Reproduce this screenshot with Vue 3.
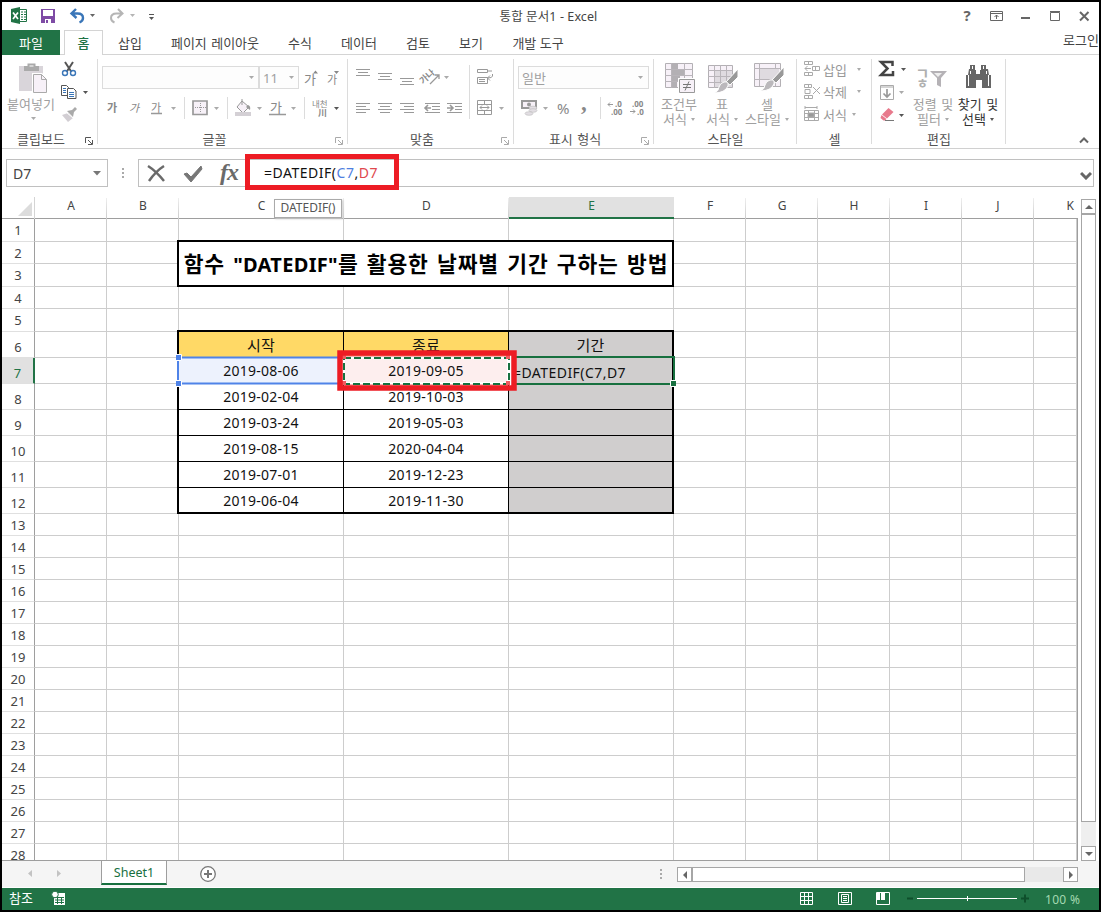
<script setup>
const tabs = [
  { label: '삽입', cls: 't-s' },
  { label: '페이지 레이아웃', cls: 't-xl' },
  { label: '수식', cls: 't-s' },
  { label: '데이터', cls: 't-m' },
  { label: '검토', cls: 't-s' },
  { label: '보기', cls: 't-s2' },
  { label: '개발 도구', cls: 't-l' }
]
const columns = ['A', 'B', 'C', 'D', 'E', 'F', 'G', 'H', 'I', 'J', 'K']
const dates = {
  7: ['2019-08-06', '2019-09-05'],
  8: ['2019-02-04', '2019-10-03'],
  9: ['2019-03-24', '2019-05-03'],
  10: ['2019-08-15', '2020-04-04'],
  11: ['2019-07-01', '2019-12-23'],
  12: ['2019-06-04', '2019-11-30']
}
const heads = { C: '시작', D: '종료', E: '기간' }

function cellText(c, r) {
  if (r === 6) return heads[c] || ''
  if (dates[r]) {
    if (c === 'C') return dates[r][0]
    if (c === 'D') return dates[r][1]
    if (c === 'E' && r === 7) return '=DATEDIF(C7,D7'
  }
  return ''
}
function cellClass(c, r) {
  const inTable = 'CDE'.includes(c) && r >= 6 && r <= 12
  return {
    tbl: inTable,
    head: inTable && r === 6 && c !== 'E',
    gray: inTable && c === 'E',
    first: r === 6 && inTable,
    last: r === 12 && inTable,
    lft: inTable && c === 'C',
    rgt: inTable && c === 'E',
    refc: c === 'C' && r === 7,
    refd: c === 'D' && r === 7,
    edit: c === 'E' && r === 7
  }
}
const caret = (x, y) => `M${x} ${y}h5l-2.5 3z`
const lines = (list) => list.map(([x, y, w]) => `M${x} ${y}.5h${w}`).join('')
</script>

<template>
  <div class="window">
    <!-- title bar -->
    <header class="titlebar">
      <svg class="quick" width="168" height="28" viewBox="2 2 168 28">
        <path d="M20 9.5h6.5v12H20" fill="#fff" stroke="#217346" />
        <path d="M21 12h2m1 0h2m-5 2.500h2m1 0h2m-5 2.500h2m1 0h2m-5 2.500h2m1 0h2" stroke="#217346" />
        <path d="M11 9l9-2v17l-9-2z" fill="#217346" />
        <path d="M13 12.500l5 6.500m0-6.500l-5 6.500" stroke="#fff" stroke-width="1.700" />
        <path d="M41 9h14v14h-14z" fill="#7e4ba5" />
        <path d="M43 10h10v6h-10zM45 19h6v4h-6z" fill="#fff" /><path d="M46 20h2v3h-2z" fill="#7e4ba5" />
        <path d="M76 9l-4.500 4.500 5 4.500M72 13.500h5.500q5.500 0 5.500 4.500 0 3-3.500 4.500" fill="none" stroke="#3a76b8" stroke-width="2.400" />
        <path d="M118 9l4.500 4.500-5 4.500M122 13.500h-5.500q-5.500 0-5.500 4.500 0 3 3.500 4.500" fill="none" stroke="#b5b5b5" stroke-width="2" />
        <path :d="caret(90, 14)" fill="#666" /><path :d="caret(130, 14)" fill="#b5b5b5" />
        <path d="M149 14.500h5" stroke="#555" /><path :d="caret(149, 17)" fill="#555" />
      </svg>
      <div class="doc">통합 문서1 - Excel</div>
      <svg class="winbtns" width="136" height="28" viewBox="960 2 136 28">
        <text x="963.500" y="21" class="q">?</text>
        <g fill="none" stroke="#666">
          <path d="M990.500 11.500h12v9h-12zM990 13.500h13M996.500 19v-4m-2 2l2-2 2 2" />
          <path d="M1021 18h9" stroke-width="2" />
          <path d="M1050.500 12.500h9v8h-9zM1050 11.500h10" />
          <path d="M1080 12l8.500 8.500m0-8.500l-8.500 8.500" stroke-width="2" />
        </g>
      </svg>
    </header>

    <!-- ribbon tabs -->
    <nav class="tabs">
      <span class="file">파일</span>
      <span class="home">홈</span>
      <span v-for="t in tabs" :key="t.label" class="tab" :class="t.cls">{{ t.label }}</span>
      <span class="login">로그인</span>
    </nav>

    <!-- ribbon -->
    <section class="ribbon">
      <div class="group g-clip">
        <div class="body">
          <div class="big paste">
            <svg width="50" height="38" viewBox="6 57 50 38">
              <path d="M19 66h24v25H19z" fill="#d9d5da" /><path d="M24 66h15v5H24z" fill="#aaa" /><path d="M28.500 64.500h6v3h-6z" fill="#fff" stroke="#aaa" stroke-width="2" />
              <path d="M32 73h10l6 5v16h-16z" fill="#fff" /><path d="M33.500 74.500h8l5 5v13h-13z" fill="#f7f1f8" stroke="#aaa" /><path d="M41.500 74.500v5h5" fill="none" stroke="#aaa" />
            </svg>
            <span>붙여넣기</span>
            <svg width="50" height="8" viewBox="6 113 50 8"><path :d="caret(31, 117)" fill="#aaa" /></svg>
          </div>
          <svg width="38" height="70" viewBox="58 57 38 70">
            <path d="M65 62l6.500 10M73 62l-6.500 10" stroke="#555" stroke-width="2" />
            <g fill="none" stroke="#3a76b8" stroke-width="1.400"><circle cx="65" cy="73" r="2.500" /><circle cx="73" cy="73" r="2.500" /></g>
            <g fill="#fff" stroke="#555"><path d="M61.500 85.500h5l2 2v8h-7z" /><path d="M67.500 88.500h6l2.500 2.500v7.500h-8.500z" /></g>
            <path d="M63 88.500h3m-3 2h3m-3 2h3M69 92.500h5m-5 2h5m-5 2h5" stroke="#3a76b8" />
            <path :d="caret(83, 91)" fill="#555" />
            <path d="M62 115l6-2 5 5-5 4z" fill="#d2ced3" /><path d="M67 111l5-1 3-3 2 2-3 3-1 5z" fill="#aaa" /><path d="M66.500 112.500l6.500 5.500" stroke="#fff" />
          </svg>
        </div>
        <div class="cap"><span>클립보드</span></div>
        <svg class="launch dark" width="8" height="8" viewBox="0 0 8 8"><path d="M.5 6V.500H6M3 3l4 4M7.500 3v4.500H3" /></svg>
      </div>

      <div class="group g-font">
        <div class="body col">
          <div class="line top">
            <div class="combo wide"><svg width="5" height="3" viewBox="0 0 5 3"><path d="M0 0h5l-2.500 3z" /></svg></div>
            <div class="combo size"><span>11</span><svg width="5" height="3" viewBox="0 0 5 3"><path d="M0 0h5l-2.500 3z" /></svg></div>
            <svg width="46" height="25" viewBox="299 65 46 25">
              <text x="304" y="83" class="ga g13">가</text><text x="327" y="83" class="ga g11">가</text>
              <path d="M313 72.500h5l-2.500-3zM334 70h5l-2.500 3z" fill="#888" />
            </svg>
          </div>
          <svg width="248" height="32" viewBox="98 91 248 32">
            <text x="107" y="112" class="ga g11 b">가</text><text x="129" y="112" class="ga g11 i">가</text><text x="151" y="112" class="ga g11">가</text>
            <path d="M151 113.500h11M269 114.500h17" stroke="#999" stroke-width="1.500" />
            <path d="M184.500 97v22M227.500 97v22M304.500 97v22" stroke="#dcdcdc" />
            <path d="M193 101h14v13.500h-14z" fill="#f7f1f8" stroke="#999" stroke-width="1.700" /><path d="M195 107.500h11M200.500 103v10" stroke="#999" stroke-dasharray="1 1" />
            <path d="M242 101l7 6-6 6-6-6zM242 99v6" fill="#f7f1f8" stroke="#999" /><path d="M248 105q3 1 2 5l-4-3z" fill="#999" /><path d="M235 112h16v4h-16z" fill="#d4d0d5" />
            <text x="270" y="112" class="ga g13">가</text>
            <g fill="#aaa"><path :d="caret(171, 107)" /><path :d="caret(214, 107)" /><path :d="caret(257, 107)" /><path :d="caret(291, 107)" /></g>
            <text x="312" y="107" class="ga g8">내천</text><text x="318" y="116" class="ga g9 b">川</text><path :d="caret(334, 107)" fill="#555" />
          </svg>
        </div>
        <div class="cap"><span>글꼴</span></div>
        <svg class="launch" width="8" height="8" viewBox="0 0 8 8"><path d="M.5 6V.500H6M3 3l4 4M7.500 3v4.500H3" /></svg>
      </div>

      <div class="group g-align">
        <div class="body col">
          <svg width="164" height="34" viewBox="348 57 164 34">
            <path :d="lines([[356,69,14],[358,72,10],[356,75,14],[378,73,14],[380,76,10],[378,79,14],[400,78,14],[402,81,10],[400,84,14]])" stroke="#999" />
            <text x="419" y="80" class="ga g9 b" transform="rotate(-42 427 77)">가나</text>
            <path d="M430 84l9-9m-4 0h4v4" fill="none" stroke="#999" stroke-width="1.300" /><path :d="caret(444, 76)" fill="#aaa" />
            <path d="M469.500 65v26" stroke="#dcdcdc" />
            <path d="M477.500 69.500h10v3h-10zM477.500 77.500h10v6h-10zM488 71h4M479 79.500h6m-6 2h6M492.500 74v2q0 2-5 2m2.500-2.500l-2.500 2.500 2.500 2.500" fill="none" stroke="#999" />
          </svg>
          <svg width="164" height="32" viewBox="348 91 164 32">
            <path :d="lines([[356,103,14],[356,106,10],[356,109,14],[356,112,10],[378,103,14],[380,106,10],[378,109,14],[380,112,10],[400,103,14],[404,106,10],[400,109,14],[404,112,10],[425,103,15],[432,106,8],[432,109,8],[425,112,15],[447,103,15],[455,106,7],[455,109,7],[447,112,15]])" stroke="#999" />
            <path d="M431 108h-6m3-3l-3 3 3 3M447 108h6m-3-3l3 3-3 3" fill="none" stroke="#999" stroke-width="1.600" />
            <path d="M469.500 91v28" stroke="#dcdcdc" />
            <path d="M477.500 100.500h14v14h-14zM477 104.500h15M477 110.500h15M484.500 101v3m0 7v4M480 107.500h9m-7-2l-2 2 2 2m5-4l2 2-2 2" fill="none" stroke="#999" />
            <path :d="caret(499, 107)" fill="#aaa" />
          </svg>
        </div>
        <div class="cap"><span>맞춤</span></div>
        <svg class="launch" width="8" height="8" viewBox="0 0 8 8"><path d="M.5 6V.500H6M3 3l4 4M7.500 3v4.500H3" /></svg>
      </div>

      <div class="group g-num">
        <div class="body col">
          <div class="line top">
            <div class="combo fmt"><span>일반</span><svg width="5" height="3" viewBox="0 0 5 3"><path d="M0 0h5l-2.500 3z" /></svg></div>
          </div>
          <svg width="138" height="32" viewBox="514 91 138 32">
            <path d="M522 101h14v7h-14z" fill="#f7f1f8" stroke="#999" stroke-width="2" /><circle cx="529" cy="104.500" r="2" fill="#999" />
            <g fill="#e2dee3" stroke="#bbb" stroke-width=".600"><ellipse cx="533" cy="108" rx="4" ry="1.800" /><ellipse cx="533" cy="110.500" rx="4" ry="1.800" /><ellipse cx="529" cy="113.500" rx="4" ry="1.800" /></g>
            <g fill="#aaa"><path :d="caret(543, 107)" /></g>
            <text x="557" y="114" class="pct">%</text><text x="581" y="110" class="comma">,</text>
            <path d="M600.500 97v22" stroke="#dcdcdc" />
            <text x="615" y="107" class="dec">.0</text><text x="611" y="115" class="dec">.00</text>
            <text x="632" y="107" class="dec">.00</text><text x="637" y="115" class="dec">.0</text>
            <path d="M613 104.500h-5m2-2l-2 2 2 2M630 111.500h5m-2-2l2 2-2 2" fill="none" stroke="#999" />
          </svg>
        </div>
        <div class="cap"><span>표시 형식</span></div>
        <svg class="launch" width="8" height="8" viewBox="0 0 8 8"><path d="M.5 6V.500H6M3 3l4 4M7.500 3v4.500H3" /></svg>
      </div>

      <div class="group g-style">
        <div class="body">
          <div class="big b1">
            <svg width="50" height="38" viewBox="654 57 50 38">
              <path d="M665.500 63.500h27v24h-27z" fill="#f7f1f8" stroke="#b3b0b4" /><path d="M672 64h6v6h-6zM672 70h12v5h-12zM672 75h8v6h-8zM672 81h5v6h-5z" fill="#b3b0b4" />
              <path d="M665 69.500h28M665 75.500h28M665 81.500h28M671.500 63v25M684.500 63v25" stroke="#b9b5ba" fill="none" />
              <path d="M678 78h18v16h-18z" fill="#fff" /><path d="M679.500 79.500h15v13h-15z" fill="#f7f1f8" stroke="#999" /><path d="M683 84.500h8m-8 3h8m-2-6l-4 9" stroke="#777" />
            </svg>
            <span>조건부</span><span>서식<i class="car"></i></span>
          </div>
          <div class="big b2">
            <svg width="42" height="38" viewBox="701 57 42 38">
              <path d="M708.500 65.500h24v22h-24z" fill="#f7f1f8" stroke="#b3b0b4" /><path d="M715 71h17v16h-17z" fill="#dfdbe0" /><path d="M708 70.500h25M708 76.500h25M708 82.500h25M714.500 65v23M720.500 65v23M726.500 65v23" stroke="#b9b5ba" />
              <path d="M738 69v8l-8 8-4-3z" fill="#999" stroke="#fff" /><path d="M724 82q5-1 4 4-3 7-14 7 5-2 5-6 1-4 5-5" fill="#bbb8bc" stroke="#fff" />
            </svg>
            <span>표</span><span>서식<i class="car"></i></span>
          </div>
          <div class="big b3">
            <svg width="50" height="38" viewBox="742 57 50 38">
              <path d="M754.500 63.500h26v23h-26z" fill="#f7f1f8" stroke="#b3b0b4" /><path d="M754 68.500h26M754 79.500h26M759.500 63v23M775.500 63v23" stroke="#b9b5ba" /><path d="M760 69h19v10h-19z" fill="#dfdbe0" />
              <path d="M784 67v8l-8 8-4-3z" fill="#999" stroke="#fff" /><path d="M770 80q5-1 4 4-3 7-14 7 5-2 5-6 1-4 5-5" fill="#bbb8bc" stroke="#fff" />
            </svg>
            <span>셀</span><span>스타일<i class="car"></i></span>
          </div>
        </div>
        <div class="cap"><span>스타일</span></div>
      </div>

      <div class="group g-cell">
        <div class="body col">
          <div class="item"><svg width="17" height="16" viewBox="804 62 17 16"><path d="M804.500 62.500h8v3h-8zM808.500 62v4M804.500 73.500h8v3h-8zM808.500 73v4M812.500 67.500h7v4h-7zM815.500 67v4M811 69.500h-6m2.500-2.500l-2.500 2.500 2.500 2.500" /></svg><span>삽입</span><i class="car"></i></div>
          <div class="item"><svg width="17" height="16" viewBox="804 85 17 16"><path d="M804.500 85.500h7v3h-7zM808.500 85v4M804.500 96.500h8v3h-8zM808.500 96v4M805 90.500h5v4h-5zM813 88l7 7m0-7l-7 7" /></svg><span>삭제</span><i class="car"></i></div>
          <div class="item near"><svg width="17" height="16" viewBox="804 107 17 16"><path d="M804.500 111.500h14v10h-14zM804 114.500h15M804 118.500h15M808.500 111v11M814.500 111v11M805 108.500h12m-12-1.500v3m12-3v3" /><path d="M808 114h6v4h-6z" class="f" /></svg><span>서식</span><i class="car"></i></div>
        </div>
        <div class="cap"><span>셀</span></div>
      </div>

      <div class="group g-edit">
        <div class="body">
          <svg width="38" height="70" viewBox="872 57 38 70">
            <path d="M892.500 66v-4h-11.500l6.500 6.500-6.500 6.500h12v-4" fill="none" stroke="#444" stroke-width="2.500" />
            <path :d="caret(901, 68)" fill="#555" /><path :d="caret(899, 91)" fill="#aaa" /><path :d="caret(899, 114)" fill="#555" />
            <path d="M880.500 85.500h13v14h-13zM880 87h14" fill="#fff" stroke="#aaa" /><path d="M887 89v8m-3.500-3.500L887 97l3.500-3.500" fill="none" stroke="#999" stroke-width="1.700" />
            <path d="M888.500 108l5 4-6.500 6.500-5-4z" fill="#e8798c" /><path d="M881.500 115l5 4-1.500 1.500h-1.500l-3-2.500z" fill="#e8798c" /><path d="M885 120.500h9" stroke="#777" />
          </svg>
          <div class="big b4">
            <svg width="46" height="38" viewBox="910 57 46 38">
              <text x="915.500" y="79" class="sortk">ㄱ</text><text x="916.500" y="88" class="sortk sm">ㅎ</text>
              <path d="M930 71h17l-6 7v9l-4-2v-7z" fill="#b5b2b6" /><path d="M934 73h8l-4 4z" fill="#eee" />
            </svg>
            <span>정렬 및</span><span>필터<i class="car"></i></span>
          </div>
          <div class="big b5">
            <svg width="46" height="38" viewBox="955 57 46 38">
              <path d="M970 65h5v5h1v4h4v-4h1v-5h5v4h2l1 6h2v13h-9v-8h-6v8h-10V75h2l1-6h1z" fill="#666" /><path d="M972.500 66v3M983.500 66v3M968.500 75v11M988.500 75v11M970.500 71v3M986.500 71v3" stroke="#fff" />
            </svg>
            <span>찾기 및</span><span>선택<i class="car"></i></span>
          </div>
        </div>
        <div class="cap"><span>편집</span></div>
      </div>
      <svg class="collapse" width="12" height="8" viewBox="0 0 12 8"><path d="M2 6.500l4-4 4 4" /></svg>
    </section>

    <!-- formula bar -->
    <section class="fbar">
      <div class="namebox"><span>D7</span><svg width="8" height="5" viewBox="0 0 8 5"><path d="M0 0h8l-4 4.500z" fill="#777" /></svg></div>
      <svg class="dots" width="4" height="12" viewBox="0 0 4 12"><path d="M1 1h2v2H1zM1 5h2v2H1zM1 9h2v2H1z" fill="#aaa" /></svg>
      <div class="fbox">
        <svg width="106" height="26" viewBox="139 160 106 26">
          <path d="M148 166q8 5 16 15M164 166q-8 5-15 15" fill="none" stroke="#6a6a6a" stroke-width="2.500" />
          <path d="M184 174l3-1 4 4 10-11 1 3-11 13z" fill="#777" stroke="#777" />
          <text x="220" y="180" class="fx">fx</text>
        </svg>
        <div class="formula">=DATEDIF(<b class="r1">C7</b>,<b class="r2">D7</b></div>
        <svg class="chev" width="12" height="9" viewBox="0 0 12 9"><path d="M1 2l5 5 5-5" /></svg>
      </div>
      <div class="mark"></div>
    </section>

    <!-- sheet -->
    <section class="sheet">
      <div class="grid">
        <div class="heads">
          <div class="corner"><svg width="14" height="14" viewBox="0 0 14 14"><path d="M14 0v14H0z" fill="#dcdcdc" /></svg></div>
          <div v-for="c in columns" :key="c" class="ch" :class="{ on: c === 'E', k: c === 'K' }">{{ c }}</div>
        </div>
        <div v-for="r in 28" :key="r" class="row" :class="{ odd: r === 1 || r === 3 || r === 5, tall: r > 5 && r < 13 }">
          <div class="rh" :class="{ on: r === 7 }"><span>{{ r }}</span></div>
          <div v-for="c in columns" :key="c" class="cell" :class="cellClass(c, r)"><span>{{ cellText(c, r) }}</span></div>
        </div>
        <div class="title">함수 <span>"DATEDIF"</span>를 활용한 날짜별 기간 구하는 방법</div>
        <div class="tip">DATEDIF()</div>
        <svg class="over" width="500" height="46" viewBox="176 348 500 46">
          <path d="M508 357h166v27H508" fill="none" stroke="#17703f" stroke-width="2" /><path d="M670.500 380.500h6v6h-6z" fill="#17703f" stroke="#fff" />
          <path d="M179 357.500h162M179 383.500h162" stroke="#4f83e8" stroke-width="2" /><path d="M178 357v27" stroke="#4f83e8" stroke-width="2" />
          <path d="M175.500 354.500h6v6h-6zM175.500 380.500h6v6h-6z" fill="#4f83e8" stroke="#fff" />
          <path d="M343.500 357.500h165v26h-165z" fill="none" stroke="#fff" stroke-width="3" />
          <path d="M511 355v31" stroke="#fff" stroke-width="2" />
          <path d="M345 356h163M345 385h163" stroke="#f05a5f" />
          <path d="M344 358h165v26H344z" fill="none" stroke="#17703f" stroke-width="2" stroke-dasharray="7 3" />
          <path d="M342 355h4v4h-4zM506 355h4v4h-4zM342 381h4v4h-4zM506 381h4v4h-4z" fill="#f05a5f" />
          <path d="M340 353h174v35H340z" fill="none" stroke="#ed1c24" stroke-width="5.500" />
        </svg>
      </div>
      <div class="vbar">
        <div class="sb"><svg width="8" height="4" viewBox="0 0 8 4"><path d="M4 0l4 4H0z" /></svg></div>
        <div class="vthumb"></div>
        <div class="vtrack"></div>
        <div class="sb"><svg width="8" height="4" viewBox="0 0 8 4"><path d="M0 0h8L4 4z" /></svg></div>
      </div>
    </section>

    <!-- sheet tabs -->
    <section class="stabs">
      <svg width="98" height="26" viewBox="2 861 98 26"><path d="M32 870v7l-4-3.500zM57 870v7l4-3.500z" fill="#c3c3c3" /></svg>
      <div class="stab">Sheet1</div>
      <svg class="plus" width="18" height="18" viewBox="0 0 18 18"><circle cx="9" cy="9" r="7.300" /><path d="M5 9h8M9 5v8" /></svg>
      <svg class="dots hd" width="4" height="12" viewBox="0 0 4 12"><path d="M1 1h2v2H1zM1 5h2v2H1zM1 9h2v2H1z" fill="#aaa" /></svg>
      <div class="hbar">
        <div class="sb"><svg width="4" height="8" viewBox="0 0 4 8"><path d="M4 0v8L0 4z" /></svg></div>
        <div class="hthumb"></div>
        <div class="sb"><svg width="4" height="8" viewBox="0 0 4 8"><path d="M0 0v8l4-4z" /></svg></div>
      </div>
    </section>

    <!-- status bar -->
    <footer class="status">
      <span class="mode">참조</span>
      <svg width="16" height="16" viewBox="51 891 16 16"><path d="M54 893h11v12H54z" fill="#fff" /><path d="M55 897.500h9m-9 2.500h9m-9 2.500h9M57.500 897v7M61.500 897v7" stroke="#217346" /><circle cx="55" cy="894.500" r="3.300" fill="#fff" stroke="#217346" /></svg>
      <svg class="zoom" width="236" height="20" viewBox="798 889 236 20">
        <g fill="none" stroke="#fff">
          <path d="M800.500 892.500h12v12h-12zM800 896.500h13M800 900.500h13M804.500 892v13M808.500 892v13" />
          <path d="M838.500 892.500h13v12h-13zM841.500 894.500h7v8h-7zM843 896.500h4m-4 2h4m-4 2h4" />
          <path d="M876.500 892.500h13v12h-13z" />
        </g>
        <path d="M877 893h3v7h-3zM881 893h4v7h-4z" fill="#fff" />
        <path d="M907 898.500h6M1021 898.500h8M1025 894.500v8" stroke="#0e4f2b" stroke-width="2" />
        <path d="M917 898.500h100M967.500 896v5" stroke="#fff" />
      </svg>
      <span class="pc">100 %</span>
    </footer>
  </div>
</template>

<style>
html, body { margin: 0; overflow: hidden; }
</style>

<style scoped>
.window { width: 1101px; height: 912px; box-sizing: border-box; border: 2px solid #000; background: #fff; overflow: hidden; font-family: "Noto Sans", "Noto Sans CJK KR", sans-serif; font-size: 13px; color: #444; display: flex; flex-direction: column; }
svg { display: block; flex: none; }
.titlebar { height: 28px; display: flex; }
.doc { flex: 1; text-align: center; line-height: 30px; font-size: 12.500px; letter-spacing: .1px; margin-right: 33px; }
.winbtns { margin-right: 3px; }
.q { font: bold 15px "Noto Sans"; fill: #666; }
.tabs { height: 25px; display: flex; box-sizing: border-box; line-height: 26px; box-shadow: inset 0 -1px #d4d4d4; text-align: center; color: #444; white-space: nowrap; }
.file { width: 58px; background: #217346; color: #fff; }
.home { width: 39px; margin-left: 4px; box-sizing: border-box; border: 1px solid #d4d4d4; border-bottom: 0; background: #fff; color: #217346; line-height: 25px; font-weight: 500; }
.t-s { width: 54px; } .t-s2 { width: 52px; } .t-m { width: 64px; } .t-l { width: 82px; } .t-xl { width: 116px; word-spacing: 1px; }
.login { margin-left: auto; line-height: 20px; width: 36px; color: #444; }
.ribbon { height: 93px; border-bottom: 1px solid #d0d0d0; display: flex; position: relative; }
.group { position: relative; box-sizing: border-box; height: 93px; display: flex; flex-direction: column; padding-top: 2px; }
.group::after { content: ""; position: absolute; right: 0; top: 4px; height: 85px; width: 1px; background: #dcdcdc; }
.g-clip { width: 96px; } .g-font { width: 250px; } .g-align { width: 166px; } .g-num { width: 140px; } .g-style { width: 143px; } .g-cell { width: 75px; } .g-edit { width: 134px; }
.body { display: flex; height: 72px; flex: none; }
.col { flex-direction: column; }
.cap { line-height: 21px; height: 19px; text-align: center; color: #555; }
.g-clip .cap { padding-right: 18px; }
.g-font .cap { padding-right: 17px; } .g-align .cap { padding-right: 18px; } .g-num .cap { padding-right: 18px; word-spacing: 1px; }
.launch { position: absolute; right: 5px; top: 82px; fill: none; stroke: #aaa; }
.launch.dark { stroke: #555; }
.big { display: flex; flex-direction: column; align-items: center; color: #a0a0a0; white-space: nowrap; }
.big span { line-height: 15px; height: 15px; display: flex; align-items: center; position: relative; top: 2px; }
.big.paste { padding: 0 2px 0 4px; }
.big.paste span { line-height: 18px; height: 18px; top: 0; }
.b2 { width: 36px; } .b1 { width: 50px; } .b3 { width: 54px; } .b4 { width: 46px; } .b5 { width: 44px; color: #333; }
.b4 span, .b5 span { word-spacing: 1px; }
.car { width: 0; height: 0; border: 2.5px solid transparent; border-top: 3px solid #aaa; border-bottom: 0; margin-left: 4px; }
.b5 .car { border-top-color: #555; }
.line { display: flex; height: 34px; box-sizing: border-box; padding: 9px 0 0 4px; }
.combo { height: 23px; box-sizing: border-box; border: 1px solid #dcdcdc; background: #fdfdfd; display: flex; align-items: center; color: #a0a0a0; padding: 0 4px; font-size: 13px; }
.combo svg { margin-left: auto; fill: #aaa; }
.wide { width: 157px; } .size { width: 40px; padding-left: 3px; } .fmt { width: 131px; padding: 0 5px 0 3px; }
.ga { font-family: "Noto Sans CJK KR", sans-serif; fill: #888; }
.g13 { font-size: 13px; } .g11 { font-size: 11px; } .g9 { font-size: 9px; } .g8 { font-size: 8.500px; } .b { font-weight: bold; } .i { font-style: italic; }
.pct { font: 15px "Noto Sans"; fill: #888; } .comma { font: bold 23px "Liberation Serif"; fill: #888; } .dec { font: bold 8px "Noto Sans"; fill: #888; }
.sortk { font: bold 15px "Noto Sans CJK KR"; fill: #b0b0b0; } .sm { font-size: 13px; }
.item { display: flex; align-items: center; height: 22.6px; padding: 2px 0 0 7px; box-sizing: border-box; color: #999; font-size: 13px; }
.item svg { fill: none; stroke: #aaa; margin-right: 2px; }
.item .f { fill: #999; }
.item .car { margin-left: 10px; } .item.near .car { margin-left: 5px; }
.collapse { position: absolute; left: 1076px; top: 81px; fill: none; stroke: #666; stroke-width: 2; }
.fbar { height: 48px; position: relative; display: flex; align-items: flex-start; padding: 10px 0 0 4px; box-sizing: border-box; }
.namebox { width: 102px; height: 28px; box-sizing: border-box; border: 1px solid #c0c0c0; display: flex; align-items: center; justify-content: space-between; padding: 0 6px 0 6px; font-size: 14px; }
.dots { margin: 8px 13px 0 13px; }
.fbox { width: 956px; height: 28px; box-sizing: border-box; border: 1px solid #c0c0c0; display: flex; align-items: center; }
.fx { font: italic bold 24px "Liberation Serif"; fill: #6a6a6a; letter-spacing: -1px; }
.formula { margin-left: 19px; font-size: 14px; color: #111; letter-spacing: .52px; flex: 1; position: relative; top: -1px; }
.formula b { font-weight: normal; } .r1 { color: #4f7fe0; } .r2 { color: #e0484d; }
.chev { margin: 4px 1px 0 0; fill: none; stroke: #666; stroke-width: 3; }
.mark { position: absolute; left: 243px; top: 5px; width: 154px; height: 36px; box-sizing: border-box; border: 5px solid #ed1c24; }
.sheet { height: 664px; display: flex; flex: none; }
.grid { width: 1076px; height: 664px; box-sizing: border-box; position: relative; overflow: hidden; flex: none; display: flex; flex-direction: column; }
.grid::after { content: ""; position: absolute; left: 0; right: 0; bottom: 0; top: 21px; border-right: 1px solid #9e9e9e; border-bottom: 1px solid #9e9e9e; }
.heads, .row { display: grid; grid-template-columns: 33px 72px 72px 165px 165px 165px 72px 72px 72px 72px 72px 43px; flex: none; }
.heads { height: 22px; box-shadow: inset 0 -1px #9e9e9e; text-align: center; line-height: 17px; font-size: 12px; color: #444; }
.corner { padding: 5px 0 0 16px; border-right: 1px solid #d4d4d4; }
.ch { background: linear-gradient(#eee, #ccc) right / 1px 21px no-repeat; }
.ch.on { background: #e1e1e1; color: #217346; border-bottom: 2px solid #217346; height: 20px; }
.ch.k { background: none; text-align: right; padding-right: 3px; }
.row { height: 22px; }
.row.odd { height: 23px; } .row.tall { height: 26px; }
.rh { border-right: 1px solid #9e9e9e; border-bottom: 1px solid #e0e0e0; text-align: center; font-size: 13px; display: flex; align-items: center; justify-content: center; box-sizing: border-box; }
.tall .rh { padding-top: 5px; }
.rh.on { background: #e1e1e1; color: #217346; border-right: 2px solid #217346; }
.cell { box-sizing: border-box; border-right: 1px solid #cdcdcd; border-bottom: 1px solid #cdcdcd; display: flex; align-items: center; justify-content: center; font-size: 14px; color: #111; letter-spacing: .25px; white-space: nowrap; min-width: 0; }
.tbl { border-color: #000; }
.head { background: #ffd966; }
.gray { background: #d0cece; }
.refc { background: #edf2fd; } .refd { background: #fdeeee; }
.lft { box-shadow: -2px 0 #000; } .rgt { border-right: 2px solid #000; }
.first { position: relative; box-shadow: 0 -2px #000; font-size: 15px; }
.first.lft { box-shadow: -2px 0 #000, -2px -2px #000, 0 -2px #000; }
.last { border-bottom-width: 2px; }
.edit { justify-content: flex-start; padding: 3px 0 0 4px; letter-spacing: .45px; }
.title { position: absolute; left: 175px; top: 43px; width: 497px; height: 47px; box-sizing: border-box; border: 2px solid #000; background: #fff; font-size: 21.500px; font-weight: bold; color: #000; line-height: 43px; text-align: center; white-space: nowrap; letter-spacing: .9px; word-spacing: 1.700px; padding-left: 1px; }
.title span { font-size: 20px; letter-spacing: .3px; }
.tip { position: absolute; left: 272px; top: 2px; width: 68px; height: 19px; box-sizing: border-box; border: 1px solid #aaa; background: #fff; font-size: 12px; line-height: 16px; text-align: center; color: #555; box-shadow: 1px 1px 2px #ccc; }
.over { position: absolute; left: 174px; top: 151px; }
.vbar { width: 15px; margin: 2px 0 0 3px; display: flex; flex-direction: column; height: 662px; }
.sb { width: 15px; height: 15px; box-sizing: border-box; border: 1px solid #a6a6a6; background: #fff; display: flex; align-items: center; justify-content: center; flex: none; }
.sb svg { fill: #666; }
.vthumb { height: 608px; border: 1px solid #a6a6a6; box-sizing: border-box; background: #fff; }
.vtrack { flex: 1; background: #efefef; }
.stabs { height: 27px; background: #f5f5f5; display: flex; flex: none; border-bottom: 1px solid #fff; box-sizing: border-box; }
.stab { width: 66px; box-sizing: border-box; height: 24px; margin: 0 0 0 1px; background: #fff; border: 1px solid #9e9e9e; border-top: 0; border-bottom: 2px solid #17703f; color: #17703f; font-size: 12.500px; line-height: 23px; text-align: center; }
.plus { margin: 4px 0 0 32px; fill: #fff; stroke: #777; stroke-width: 1.300; }
.plus path { stroke-width: 2; }
.dots.hd { margin: 7px 14px 0 442px; }
.hbar { display: flex; margin-top: 6px; width: 401px; background: #e9e9e9; height: 15px; }
.hthumb { width: 333px; border: 1px solid #a6a6a6; background: #fff; box-sizing: border-box; margin-right: auto; }
.status { height: 22px; background: #217346; display: flex; align-items: center; color: #fff; flex: none; }
.mode { width: 49px; padding-left: 7px; box-sizing: border-box; line-height: 18px; margin-top: -2px; }
.zoom { margin-left: 731px; }
.pc { color: #a3d9b1; font-size: 12px; margin-left: 11px; letter-spacing: .3px; }
</style>
